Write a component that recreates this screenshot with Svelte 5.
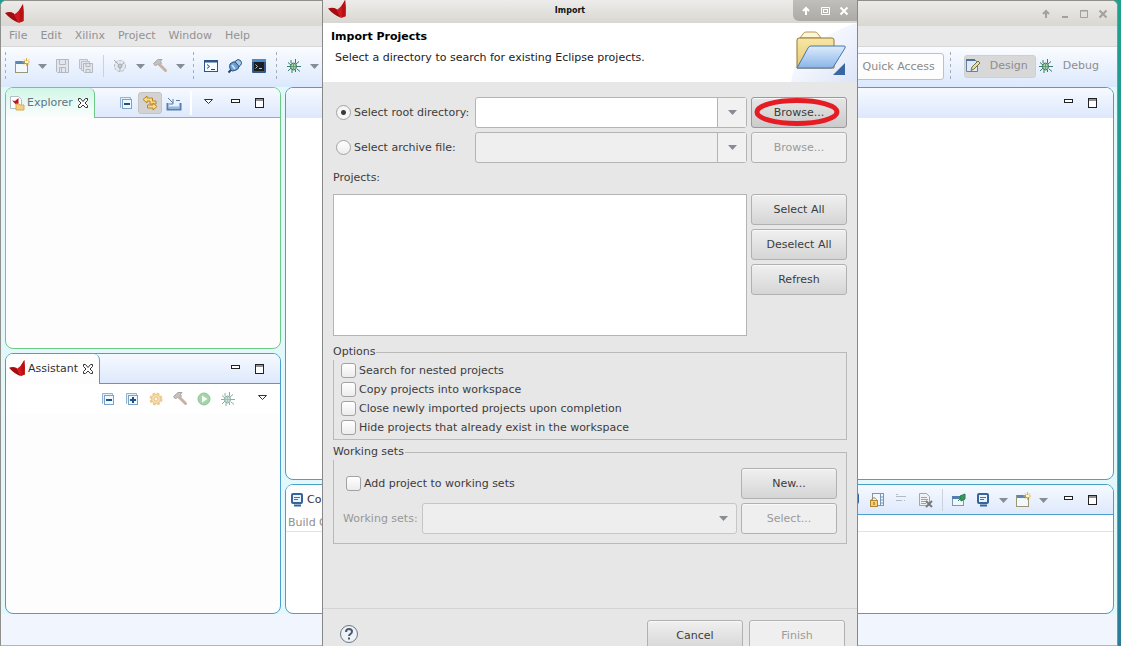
<script>
  const menus = ['File', 'Edit', 'Xilinx', 'Project', 'Window', 'Help'];
  const options = [
    'Search for nested projects',
    'Copy projects into workspace',
    'Close newly imported projects upon completion',
    'Hide projects that already exist in the workspace'
  ];
  let source = $state('root');
</script>

{#snippet logo(size)}
  <svg width={size} height={size} viewBox="0 0 20 20" aria-hidden="true">
    <path d="M0 9 Q5 7 9 9.500 L11 13 L14 19 Q6 16 0 9Z" fill="#a30d10" />
    <path d="M18 0 Q19 8 18.500 17 L14 19 L9 10.500Q14 8 18 0Z" fill="#d3171b" />
    <path d="M14.500 6 L18 0 Q19 8 18.500 17 L15 18Z" fill="#b81014" />
  </svg>
{/snippet}

{#snippet icon(name)}
  <svg width="16" height="16" viewBox="0 0 16 16" fill="none" aria-hidden="true">
    {#if name === 'new'}
      <rect x="1.5" y="3.5" width="12" height="11" fill="#f3f8fd" stroke="#9a9676" />
      <rect x="2" y="3" width="10" height="3" fill="#5a86b4" />
      <path d="M12.500 0v8M8.500 4h8M10 1.500l5 5M15 1.500l-5 5" stroke="#e0b040" />
      <rect x="11" y="3" width="3" height="2" fill="#fff6c0" />
    {:else if name === 'save'}
      <path d="M2.500 1.500h12v13h-11l-1-1z" fill="#e3e6ec" stroke="#b4b8c0" />
      <path d="M5.500 1.500v5h6v-5M5.500 14.500v-5h6v5M7.500 10v4" stroke="#b4b8c0" />
    {:else if name === 'saveall'}
      <path d="M1.500 1.500h8v9h-8z" fill="#e3e6ec" stroke="#bcc0c8" />
      <path d="M3.500 3.500h8v9h-8z" fill="#e3e6ec" stroke="#bcc0c8" />
      <path d="M5.500 5.500h9v9h-8l-1-1z" fill="#e3e6ec" stroke="#b4b8c0" />
      <path d="M8 5.500v3h4v-3M8 14.500v-3h4v3" stroke="#b4b8c0" />
    {:else if name === 'gauge'}
      <circle cx="8" cy="8" r="5.500" fill="#e6eaf0" stroke="#b0b7c1" stroke-dasharray="3 1" />
      <path d="M2 2l5 5M8 8l4-3M8 8v5" stroke="#a2aab4" />
      <circle cx="8" cy="8" r="2" fill="#c4cad2" stroke="#a2aab4" />
    {:else if name === 'hammer'}
      <path d="M1.500 5.500 6 1.500 10 1.500 8.500 3.500 9.500 5 7 7.500 5.500 6 3.500 8Z" fill="#c4c1c1" stroke="#aaa5a4" />
      <path d="M7.500 6.500 13.500 12.500" stroke="#c9b2a5" stroke-width="3" stroke-linecap="round" />
    {:else if name === 'terminal'}
      <rect x="1.500" y="2.500" width="13" height="11" fill="#f5fbff" stroke="#2c5687" />
      <path d="M1 3.500h14" stroke="#2c5687" stroke-width="2" />
      <path d="M4 6.500l2.500 2L4 10.500M8 11.500h4" stroke="#24466e" />
    {:else if name === 'plug'}
      <path d="M1.500 14.500l3-3" stroke="#24466e" stroke-width="2" />
      <path d="M3 6 Q6 3 9 4L12 8Q12 11 9 12Q5 14 3.500 12Q2 9 3 6Z" fill="#6c9ed2" stroke="#24517f" />
      <path d="M8 3.500Q11 0 13.500 2.500Q16 6 12 8.500Z" fill="#a9cbea" stroke="#24517f" />
      <path d="M5 7l3 4" stroke="#c5def4" stroke-width="2" />
    {:else if name === 'console'}
      <rect x="1" y="1" width="14" height="14" rx="1" fill="#315a88" />
      <path d="M1 2.500h14" stroke="#4b8dcb" stroke-width="3" />
      <rect x="3" y="4" width="10" height="9" fill="#1b1d20" />
      <path d="M4.500 6.500l2 2-2 2M8 10.500h3" stroke="#b9c2c8" />
    {:else if name === 'bug'}
      <path d="M5 2v3M9.500 1v4M2 4.500l3 2.500M13 3.500l-3 2.500M1 8.500h14M2 13l3-3M6 12v3M11 11l3 2.500M9.500 12v2" stroke="#3b7d68" />
      <ellipse cx="7.500" cy="8.500" rx="3" ry="3.500" fill="#a9d6ae" stroke="#2f725f" />
      <path d="M5 8.500h5M7.500 6v5" stroke="#649d7c" />
    {:else if name === 'collapse' || name === 'expand'}
      <path d="M3 12.500H2.500v-10h10V4" fill="#e4f0fb" stroke="#8fb4d7" />
      <rect x="4.500" y="4.500" width="9" height="9" fill="#f0f8ff" stroke="#7ba3ca" />
      <path d="M6 9h6" stroke="#24517f" stroke-width="2" />
      {#if name === 'expand'}<path d="M9 6v6" stroke="#24517f" stroke-width="2" />{/if}
    {:else if name === 'link'}
      <path d="M1 4.500 5 1v2h5.500v3H14v3H8V6H5v2Z" fill="#f8da8c" stroke="#bb8625" />
      <path d="M15 11.500 11 8v2H5.500v3H11v2Z" fill="#f8da8c" stroke="#bb8625" />
    {:else if name === 'import'}
      <path d="M1.500 8v6.500h13V8" stroke="#557fac" stroke-width="2" />
      <path d="M2 3l5 5M7 4v5H3M10 5.500h4" stroke="#527fae" />
      <path d="M3 12.500h10" stroke="#94b8da" stroke-width="2" />
    {:else if name === 'gear'}
      <circle cx="8" cy="8" r="5" fill="#f5d59a" stroke="#eccb93" stroke-width="3" stroke-dasharray="2.600 1.330" />
      <circle cx="8" cy="8" r="4.500" fill="#f8dfb1" stroke="#ebc88d" />
      <circle cx="8" cy="8" r="2" fill="#fff8e8" stroke="#e6c188" />
    {:else if name === 'run'}
      <circle cx="8" cy="8" r="6" fill="#a2d6a8" stroke="#90c399" />
      <path d="M6 4.500v7L11.500 8z" fill="#fff" />
    {:else if name === 'monitor'}
      <rect x="3" y="2" width="10" height="9" rx="1" fill="#e8f3fd" stroke="#34649b" stroke-width="2" />
      <path d="M5 5.500h6M5 7.500h4" stroke="#4475a8" />
      <path d="M5 13.500h7" stroke="#34649b" stroke-width="2" />
    {:else if name === 'lock'}
      <rect x="3.500" y="1.500" width="11" height="12" fill="#f3f6fa" stroke="#7f95ad" />
      <path d="M11.500 2v11M12 5h2M12 8h2M12 11h2" stroke="#7896b5" />
      <path d="M2.500 9V7.500Q5 4 7.500 7.500V9" stroke="#b08835" />
      <rect x="1.500" y="8.500" width="7" height="6" fill="#f6d06f" stroke="#b08835" />
      <path d="M5 10v3" stroke="#876421" />
    {:else if name === 'wrap'}
      <path d="M3 4.500h10M3 8.500h6M3 2.500h2M11 8.500h1" stroke="#b0bac9" />
    {:else if name === 'clear'}
      <path d="M2.500 1.500h7l3 3v9h-10z" fill="#f0f1f3" stroke="#a2a6ad" />
      <path d="M4 5.500h6M4 7.500h7M4 9.500h5M4 11.500h5" stroke="#96a3b7" />
      <path d="M9 9l6 6M15 9l-6 6" stroke="#777b80" stroke-width="2" />
    {:else if name === 'pin'}
      <rect x="1.500" y="5.500" width="11" height="8" fill="#f0f7fc" stroke="#7c9aae" />
      <path d="M1 5.500h12" stroke="#527fae" stroke-width="3" />
      <path d="M7 9l3-3M9 4l5-2v5l-4 2z" fill="#38975d" stroke="#25824d" />
    {:else if name === 'edit'}
      <path d="M1.500 1.500h8l3 3v9h-11z" fill="#dfeaf7" stroke="#667fa3" />
      <path d="M1 2h9" stroke="#50709c" stroke-width="2" />
      <path d="M6 12.500 7 9l6-6 2 2-6 6z" fill="#f3df83" stroke="#6f725c" />
    {:else if name === 'project'}
      <path d="M1.500 1.500h8l3 3v9h-11z" fill="#fff" stroke="#b6bcc5" />
      <path d="M3 5.500l3 .5 3.500-3v7L7 9.500Z" fill="#be1519" />
      <path d="M7 9h3l1 1h4v5H7z" fill="#f5ce82" stroke="#d8a952" />
    {:else if name === 'close'}
      <path d="M3.500 3.500h2l2.500 3 2.500-3h2v2L10 8l2.500 2.500v2h-2L8 10l-2.500 2.500h-2v-2L6 8 3.500 5.500z" fill="#fff" stroke="#333" />
    {:else if name === 'viewmenu'}
      <path d="M4.500 4.500h8L8.500 8.500z" fill="#fff" stroke="#333" />
    {:else if name === 'min'}
      <rect x="3.500" y="4.500" width="8" height="3" fill="#fff" stroke="#222" />
    {:else if name === 'max'}
      <rect x="3.500" y="3.500" width="8" height="9" fill="#fff" stroke="#222" />
      <path d="M3 5h9" stroke="#222" />
    {:else if name === 'w-up'}
      <path d="M8 12V5M5 8l3-3 3 3" stroke="currentColor" stroke-width="2" />
    {:else if name === 'w-min'}
      <path d="M5 11h6" stroke="currentColor" stroke-width="2" />
    {:else if name === 'w-max'}
      <path d="M4.500 4.500h7v7h-7zM4 5h8" stroke="currentColor" />
    {:else if name === 'w-full'}
      <path d="M4.500 4.500h8v7h-8z" stroke="currentColor" />
      <rect x="6.500" y="6.500" width="4" height="3" stroke="currentColor" />
    {:else if name === 'w-close'}
      <path d="M4.500 4.500l7 7M11.500 4.500l-7 7" stroke="currentColor" stroke-width="2" />
    {/if}
  </svg>
{/snippet}

{#snippet tool(name, label, extra = '')}
  <button type="button" class="tool {extra}" aria-label={label}>{@render icon(name)}</button>
{/snippet}

{#snippet caret(label)}
  <button type="button" class="caret" aria-label={label}>
    <svg width="9" height="5" viewBox="0 0 9 5" aria-hidden="true"><path d="M0 0h9L4.500 5z" fill="#878d95" /></svg>
  </button>
{/snippet}

<div class="desktop">
  <div class="ide">
    <header class="titlebar">
      {@render logo(20)}
      <div class="winbtns">
        {@render tool('w-up', 'Roll up', 'win')}
        {@render tool('w-min', 'Minimize', 'win')}
        {@render tool('w-max', 'Maximize', 'win')}
        {@render tool('w-close', 'Close', 'win')}
      </div>
    </header>

    <nav class="menubar">
      {#each menus as m}<button type="button">{m}</button>{/each}
    </nav>

    <div class="toolbar">
      <span class="grip first"></span>
      {@render tool('new', 'New')}
      {@render caret('New options')}
      {@render tool('save', 'Save')}
      {@render tool('saveall', 'Save all')}
      <span class="sep"></span>
      {@render tool('gauge', 'Build configuration')}
      {@render caret('Configurations')}
      {@render tool('hammer', 'Build')}
      {@render caret('Build options')}
      <span class="grip"></span>
      {@render tool('terminal', 'Terminal')}
      {@render tool('plug', 'Connect')}
      {@render tool('console', 'Console')}
      <span class="grip"></span>
      {@render tool('bug', 'Debug')}
      {@render caret('Debug options')}
      <div class="perspectives">
        <input class="quick" type="text" placeholder="Quick Access" aria-label="Quick Access" />
        <span class="grip"></span>
        <button type="button" class="persp on">{@render icon('edit')}<span>Design</span></button>
        <button type="button" class="persp">{@render icon('bug')}<span>Debug</span></button>
      </div>
    </div>

    <main class="panes">
      <div class="column">
        <section class="pane green">
          <div class="head">
            <div class="tab">{@render icon('project')}<span>Explorer</span>{@render icon('close')}</div>
            <div class="actions">
              {@render tool('collapse', 'Collapse all')}
              {@render tool('link', 'Link with editor', 'pressed')}
              {@render tool('import', 'Import')}
              <span class="divider"></span>
              {@render tool('viewmenu', 'View menu', 'wide')}
              {@render tool('min', 'Minimize view')}
              {@render tool('max', 'Maximize view')}
            </div>
          </div>
        </section>
        <section class="pane">
          <div class="head">
            <div class="tab">{@render logo(17)}<span>Assistant</span>{@render icon('close')}</div>
            <div class="actions">
              {@render tool('min', 'Minimize view')}
              {@render tool('max', 'Maximize view')}
            </div>
          </div>
          <div class="subbar">
            {@render tool('collapse', 'Collapse all')}
            {@render tool('expand', 'Expand all')}
            {@render tool('gear', 'Settings')}
            {@render tool('hammer', 'Build')}
            {@render tool('run', 'Run')}
            {@render tool('bug', 'Debug', 'faded')}
            {@render tool('viewmenu', 'View menu', 'last')}
          </div>
        </section>
      </div>

      <div class="column">
        <section class="pane editor">
          <div class="head plain">
            <div class="actions">
              {@render tool('min', 'Minimize view')}
              {@render tool('max', 'Maximize view')}
            </div>
          </div>
        </section>
        <section class="pane output">
          <div class="head">
            <div class="tab">{@render icon('monitor')}<span>Co</span></div>
            <div class="actions">
              {@render tool('monitor', 'Show console')}
              {@render tool('lock', 'Scroll lock')}
              {@render tool('wrap', 'Word wrap')}
              {@render tool('clear', 'Clear console')}
              <span class="sep"></span>
              {@render tool('pin', 'Pin console')}
              {@render tool('monitor', 'Display console')}
              {@render caret('Choose console')}
              {@render tool('new', 'Open console')}
              {@render caret('Console types')}
              {@render tool('min', 'Minimize view', 'apart')}
              {@render tool('max', 'Maximize view')}
            </div>
          </div>
          <p class="caption">Build C</p>
        </section>
      </div>
    </main>
    <footer class="status"></footer>
  </div>

  <div class="dialog" role="dialog" aria-labelledby="dialog-title">
    <header class="dlg-title">
      {@render logo(19)}
      <h1 id="dialog-title">Import</h1>
      <div class="dlg-btns">
        {@render tool('w-up', 'Roll up', 'win')}
        {@render tool('w-full', 'Maximize', 'win')}
        {@render tool('w-close', 'Close', 'win')}
      </div>
    </header>

    <div class="banner">
      <div>
        <h2>Import Projects</h2>
        <p>Select a directory to search for existing Eclipse projects.</p>
      </div>
      <svg width="66" height="59" viewBox="0 0 66 59" aria-hidden="true">
        <defs>
          <linearGradient id="sky" x1="0" y1="0" x2="0" y2="1"><stop offset="0" stop-color="#ddecfc" /><stop offset="1" stop-color="#8ab5e8" /></linearGradient>
          <linearGradient id="sand" x1="0" y1="0" x2="0" y2="1"><stop offset="0" stop-color="#f7e7a5" /><stop offset="1" stop-color="#e7c873" /></linearGradient>
          <linearGradient id="swoosh" x1="0" y1="0" x2="1" y2="1"><stop offset="0" stop-color="#fff" /><stop offset="0.500" stop-color="#f2f5fd" /><stop offset="1" stop-color="#dce4f8" /></linearGradient>
        </defs>
        <path d="M66 0v59H0Q4 30 30 16T66 0Z" fill="url(#swoosh)" />
        <path d="M9 15l3-4q1-2 3-2h9q2 0 3 2l3 4Z" fill="#fdf6d6" stroke="#b39a5c" />
        <path d="M6 45V17q0-2 2-2h33q2 0 2 2v28Z" fill="url(#sand)" stroke="#94762f" />
        <path d="M6 45 17 25q1-2 3-2h33q2 0 1 2L43 43q-1 2-3 2Z" fill="url(#sky)" stroke="#4776ad" />
        <path d="M54 40v12H42Z" fill="#3968a0" />
      </svg>
    </div>

    <form class="body" onsubmit={(e) => e.preventDefault()}>
      <div class="sources">
        <label><input type="radio" value="root" bind:group={source} />Select root directory:</label>
        <div class="combo">
          <input type="text" aria-label="Root directory" />
          {@render caret('Recent directories')}
        </div>
        <button type="button" class="btn focus">Browse...
          <svg class="ring" width="88" height="30" viewBox="0 0 88 30" aria-hidden="true">
            <ellipse cx="44" cy="15" rx="40" ry="11.500" fill="none" stroke="#e51c24" stroke-width="5" />
          </svg>
        </button>
        <label><input type="radio" value="archive" bind:group={source} />Select archive file:</label>
        <div class="combo off">
          <input type="text" aria-label="Archive file" disabled />
          {@render caret('Recent archives')}
        </div>
        <button type="button" class="btn" disabled>Browse...</button>
      </div>

      <p class="list-label" id="projects-label">Projects:</p>
      <div class="projects">
        <div class="list" role="listbox" tabindex="0" aria-labelledby="projects-label"></div>
        <div class="stack">
          <button type="button" class="btn">Select All</button>
          <button type="button" class="btn">Deselect All</button>
          <button type="button" class="btn">Refresh</button>
        </div>
      </div>

      <fieldset class="options">
        <legend>Options</legend>
        {#each options as o}
          <label><input type="checkbox" />{o}</label>
        {/each}
      </fieldset>

      <fieldset class="sets">
        <legend>Working sets</legend>
        <div class="line">
          <label class="add"><input type="checkbox" />Add project to working sets</label>
          <button type="button" class="btn">New...</button>
        </div>
        <div class="line">
          <label class="dim" for="working-sets">Working sets:</label>
          <div class="select">
            <select id="working-sets" disabled><option></option></select>
            <svg width="9" height="5" viewBox="0 0 9 5" aria-hidden="true"><path d="M0 0h9L4.500 5z" fill="#878d95" /></svg>
          </div>
          <button type="button" class="btn" disabled>Select...</button>
        </div>
      </fieldset>
    </form>

    <footer class="dlg-foot">
      <button type="button" class="help" aria-label="Help">
        <svg width="20" height="20" viewBox="0 0 20 20" fill="none" aria-hidden="true">
          <circle cx="10" cy="10" r="8.500" fill="#eef1f6" stroke="#6b7788" />
          <path d="M7 8q0-3 3-3t3 2.500q0 1.500-1.500 2.500T10 12M10 13.500v2" stroke="#4c5a70" stroke-width="2" />
        </svg>
      </button>
      <button type="button" class="btn">Cancel</button>
      <button type="button" class="btn" disabled>Finish</button>
    </footer>
  </div>
</div>

<style>
  :global(body) {
    overflow: hidden;
  }
  .desktop {
    position: relative;
    box-sizing: border-box;
    height: 100vh;
    padding-right: 3px;
    overflow: hidden;
    background: linear-gradient(#1fa08d, #2b8e9c 60%, #2a7d96);
    font: 11px/16px "DejaVu Sans", sans-serif;
    color: #3c3c3c;
  }
  .desktop *,
  .desktop *::before {
    box-sizing: border-box;
  }
  button,
  input,
  select {
    margin: 0;
    padding: 0;
    border: 0;
    background: none;
    font: inherit;
    color: inherit;
  }
  svg {
    display: block;
    flex: none;
  }
  h1, h2, p {
    margin: 0;
  }
  .ide {
    display: flex;
    flex-direction: column;
    height: 100%;
    border: 1px solid #8f8f8b;
    border-bottom-color: #b5b5b5;
    border-radius: 6px 6px 0 0;
    background: #e3f8fa;
    overflow: hidden;
  }
  .titlebar {
    display: flex;
    align-items: center;
    flex: none;
    height: 25px;
    padding: 0 6px 0 4px;
    background: linear-gradient(#ecebe8, #d9d7d1);
  }
  .winbtns {
    display: flex;
    gap: 3px;
    margin-left: auto;
    color: #a3a19d;
  }
  .menubar {
    display: flex;
    flex: none;
    gap: 13px;
    height: 21px;
    padding-left: 8px;
    background: #e8e8e8;
    border-bottom: 1px solid #d8d8d8;
    color: #929292;
  }
  .toolbar {
    display: flex;
    align-items: center;
    flex: none;
    height: 40px;
    padding: 0 18px 2px 0;
    background: linear-gradient(#fafcff, #dbe8fd);
  }
  .tool,
  .caret {
    display: grid;
    place-items: center;
    flex: none;
    width: 24px;
    height: 22px;
  }
  .caret {
    width: 16px;
  }
  .win {
    width: 16px;
  }
  .grip {
    flex: none;
    width: 11px;
    height: 28px;
    background: repeating-linear-gradient(#a6acb5 0 3px, transparent 3px 6px) center / 1px 100% no-repeat;
  }
  .grip.first {
    width: 9px;
  }
  .sep {
    flex: none;
    width: 10px;
    height: 22px;
    background: linear-gradient(#cbd2df, #cbd2df) center / 1px 100% no-repeat;
  }
  .perspectives {
    display: flex;
    align-items: center;
    margin-left: auto;
  }
  .quick {
    width: 100px;
    height: 27px;
    padding-right: 8px;
    border: 1px solid #c0c0c0;
    border-radius: 3px;
    background: #fdfdfd;
    text-align: right;
  }
  .quick::placeholder {
    color: #8a8a8a;
    opacity: 1;
  }
  .perspectives .grip {
    margin: 0 8px 0 1px;
  }
  .persp {
    display: flex;
    align-items: center;
    gap: 9px;
    height: 23px;
    border-radius: 3px;
    color: #8d8d8d;
  }
  .persp.on {
    margin-right: 2px;
    padding-right: 7px;
    border: 1px solid #cfcfcf;
    background: #d8d8d8;
  }
  .panes {
    display: grid;
    grid-template-columns: 276px minmax(0, 1fr);
    gap: 4px;
    flex: 1;
    min-height: 0;
    padding: 0 3px 0 4px;
  }
  .column {
    display: flex;
    flex-direction: column;
    gap: 4px;
    min-height: 0;
  }
  .pane {
    --edge: #4c9fcb;
    flex: 1 1 0;
    min-height: 0;
    border: 1px solid var(--edge);
    border-radius: 8px;
    background: #fdfdfd;
    overflow: hidden;
  }
  .pane.green {
    --edge: #6dca86;
  }
  .editor {
    background: #fff;
  }
  .head {
    display: flex;
    height: 30px;
    background: linear-gradient(var(--edge), var(--edge)) bottom / 100% 1px no-repeat, linear-gradient(#f6faff, #dde8fc);
  }
  .head.plain {
    background: linear-gradient(#f6faff, #dde8fc);
  }
  .tab {
    display: flex;
    align-items: center;
    gap: 2px;
    padding: 0 3px;
    border-right: 1px solid var(--edge);
    border-top-right-radius: 6px;
    background: #fdfdfd;
    color: #333;
  }
  .green .tab {
    background: linear-gradient(#d0f7e6, #fdfdfd);
    color: #5f7486;
  }
  .actions {
    display: flex;
    align-items: center;
    margin-left: auto;
    padding-right: 8px;
  }
  .apart {
    margin-left: 6px;
  }
  .pressed {
    border: 1px solid #c4c4c4;
    border-radius: 3px;
    background: #d3d3d3;
  }
  .divider {
    width: 2px;
    height: 24px;
    margin-left: 4px;
    background: #fff;
  }
  .wide {
    width: 32px;
  }
  .subbar {
    display: flex;
    align-items: center;
    justify-content: flex-end;
    height: 30px;
    padding-right: 6px;
    background: #fff;
  }
  .faded {
    opacity: 0.6;
  }
  .last {
    margin-left: 10px;
  }
  .pane.output {
    flex: 0 0 130px;
    background: #fff;
  }
  .output .tab {
    border-right: 0;
  }
  .caption {
    padding: 0 2px;
    border-bottom: 1px solid #e2e2e2;
    color: #8f8f8f;
  }
  .status {
    flex: none;
    height: 31px;
    background: #f1f5fd;
  }

  .dialog {
    position: absolute;
    top: 0;
    left: 322px;
    display: flex;
    flex-direction: column;
    width: 536px;
    min-height: 100%;
    border: solid #888;
    border-width: 0 1px;
    background: #e7e7e7;
  }
  .dlg-title {
    display: flex;
    justify-content: space-between;
    height: 23px;
    padding-left: 5px;
    background: linear-gradient(#edecea, #d9d7d2);
  }
  .dlg-title h1 {
    font: bold 8px/21px "DejaVu Sans", sans-serif;
    color: #111;
  }
  .dlg-btns {
    display: flex;
    gap: 3px;
    height: 21px;
    padding: 0 5px;
    border-radius: 0 0 0 6px;
    background: linear-gradient(#c0bfbc, #abaaa7);
    color: #fff;
  }
  .banner {
    display: flex;
    justify-content: space-between;
    height: 59px;
    background: #fff;
    color: #222;
  }
  .banner h2 {
    padding: 6px 0 5px 8px;
    font: bold 11px/16px "DejaVu Sans", sans-serif;
    color: #000;
  }
  .banner p {
    padding-left: 12px;
  }
  .body {
    padding: 15px 10px 0;
  }
  .sources {
    display: grid;
    grid-template-columns: 138px minmax(0, 1fr) 96px;
    gap: 4px;
  }
  label {
    display: flex;
    align-items: center;
    gap: 3px;
  }
  .sources label {
    padding-left: 3px;
    white-space: nowrap;
  }
  input[type='radio'],
  input[type='checkbox'] {
    appearance: none;
    flex: none;
    width: 15px;
    height: 15px;
    border: 1px solid #a2a2a2;
    border-radius: 3px;
    background: linear-gradient(#fff, #ececec);
  }
  input[type='radio'] {
    border-radius: 50%;
  }
  input[type='radio']:checked {
    background: radial-gradient(circle, #3a3a3a 0 2px, transparent 3px), #f6f6f6;
  }
  .combo {
    display: flex;
    height: 31px;
    border: 1px solid #b4b4b4;
    border-radius: 3px;
    background: #fff;
  }
  .combo input {
    flex: 1;
    min-width: 0;
    padding: 0 6px;
  }
  .combo .caret {
    width: 29px;
    height: 29px;
    border-left: 1px solid #b4b4b4;
    background: #f1f1f1;
  }
  .combo.off {
    background: #efefef;
  }
  .btn {
    position: relative;
    flex: none;
    width: 96px;
    height: 31px;
    border: 1px solid #b1b1b1;
    border-radius: 3px;
    background: linear-gradient(#f0f0f0, #d5d5d5);
    box-shadow: inset 0 1px #f8f8f8;
  }
  .btn.focus {
    border-color: #999;
    background: linear-gradient(#e6e6e6, #cbcbcb);
  }
  .btn:disabled {
    background: #efefef;
    color: #9a9a9a;
  }
  .ring {
    position: absolute;
    top: -1px;
    left: 1px;
  }
  .list-label {
    padding: 7px 0 8px;
  }
  .projects {
    display: flex;
    gap: 4px;
  }
  .list {
    flex: 1;
    border: 1px solid #b4b4b4;
    background: #fff;
  }
  .stack {
    display: flex;
    flex-direction: column;
    gap: 4px;
    height: 142px;
  }
  fieldset {
    min-width: 0;
    margin: 8px 0 0;
    padding: 0;
    border: 1px solid #b9b9b9;
  }
  legend {
    margin-left: -1px;
    padding: 0 1px 0 0;
  }
  .options {
    padding: 1px 7px 2px;
  }
  .options legend {
    margin-left: -8px;
  }
  .options label {
    height: 19px;
  }
  .sets {
    display: grid;
    gap: 4px;
    margin-top: 4px;
    padding: 8px 9px 9px;
  }
  .sets legend {
    margin-left: -10px;
  }
  .line {
    display: flex;
    align-items: center;
    gap: 4px;
  }
  .add {
    margin-right: auto;
    padding-left: 3px;
  }
  .dim {
    color: #979797;
  }
  .select {
    position: relative;
    flex: 1;
  }
  .select select {
    appearance: none;
    display: block;
    width: 100%;
    height: 31px;
    border: 1px solid #b9b9b9;
    border-radius: 3px;
    background: #f1f1f1;
  }
  .select svg {
    position: absolute;
    top: 13px;
    right: 9px;
  }
  .dlg-foot {
    display: flex;
    align-items: flex-start;
    gap: 6px;
    margin-top: auto;
    height: 38px;
    padding: 11px 12px 0 16px;
    border-top: 1px solid #d4d4d4;
  }
  .help {
    margin: 4px auto 0 0;
  }
</style>
